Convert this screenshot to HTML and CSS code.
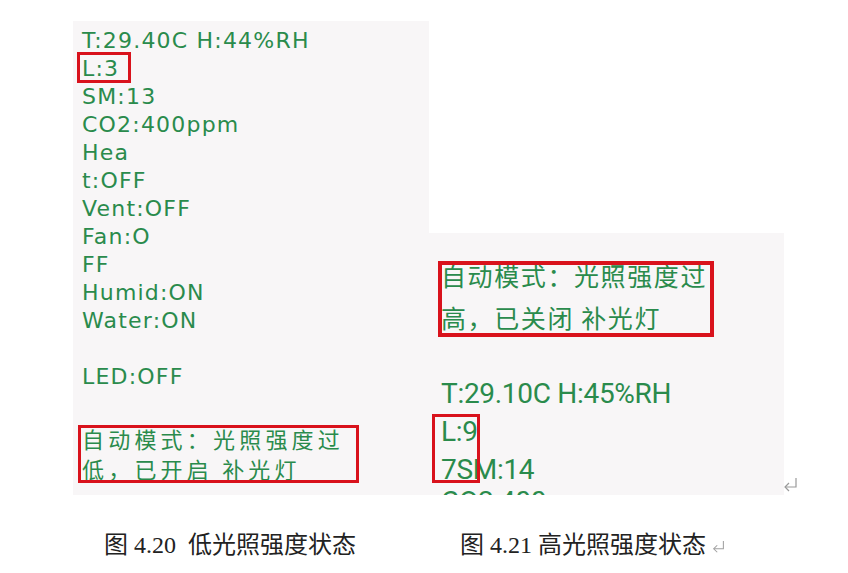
FILE: index.html
```html
<!DOCTYPE html>
<html lang="zh">
<head>
<meta charset="utf-8">
<title>光照强度状态</title>
<link rel="stylesheet" href="styles.css">
</head>
<body>
<div class="figure">
  <div class="panel panel-left">
    <div class="line">T:29.40C H:44%RH</div>
    <div class="line"><span class="mark mark-l3">L:3</span></div>
    <div class="line">SM:13</div>
    <div class="line">CO2:400ppm</div>
    <div class="line">Hea</div>
    <div class="line">t:OFF</div>
    <div class="line">Vent:OFF</div>
    <div class="line">Fan:O</div>
    <div class="line">FF</div>
    <div class="line">Humid:ON</div>
    <div class="line">Water:ON</div>
    <div class="line">&nbsp;</div>
    <div class="line">LED:OFF</div>
    <div class="line">&nbsp;</div>
    <div class="cn-left mark mark-cn-left">
      <div>自动模式：光照强度过</div>
      <div>低，已开启 补光灯</div>
    </div>
  </div>
  <div class="panel panel-right">
    <div class="cn-right mark mark-cn-right">
      <div>自动模式：光照强度过</div>
      <div>高，已关闭 补光灯</div>
    </div>
    <div class="data-right">
      <div class="rline">T:29.10C H:45%RH</div>
      <div class="rline">L:9</div>
      <div class="rline">7SM:14</div>
      <div class="rline rline-cut">CO2:400ppm</div>
    </div>
    <div class="mark-l9"></div>
  </div>
  <svg class="ret" width="16" height="16" viewBox="0 0 16 16"><polyline points="13,1 13,10 2,10" fill="none" stroke="#9a9a9a" stroke-width="1.2"/><polyline points="6,6 2,10 6,14" fill="none" stroke="#9a9a9a" stroke-width="1.2"/></svg>
</div>
<div class="captions">
  <div class="cap cap-left">图 4.20&nbsp; 低光照强度状态</div>
  <div class="cap cap-right">图 4.21 高光照强度状态 <svg class="ret-cap" width="14" height="14" viewBox="0 0 16 16"><polyline points="13,1 13,10 2,10" fill="none" stroke="#a0a0a0" stroke-width="1.2"/><polyline points="6,6 2,10 6,14" fill="none" stroke="#a0a0a0" stroke-width="1.2"/></svg></div>
</div>
</body>
</html>
```
FILE: styles.css
```css
html, body {
  margin: 0;
  padding: 0;
  background: #ffffff;
}

.figure {
  display: flex;
  align-items: flex-end;
  padding-left: 73px;
  padding-top: 21px;
}

.panel {
  background: #f8f6f7;
  color: #2a8b4c;
  position: relative;
  box-sizing: border-box;
}

.panel-left {
  width: 356px;
  height: 474px;
  padding: 6px 0 0 9px;
  font-family: "DejaVu Sans", sans-serif;
  font-size: 22px;
  letter-spacing: 1.2px;
}

.line {
  height: 28px;
  line-height: 28px;
  white-space: nowrap;
}

.mark {
  position: relative;
}

.mark-l3 {
  display: inline-block;
}

.mark-l3::after {
  content: "";
  position: absolute;
  left: -5px;
  top: -3px;
  width: 48px;
  height: 25px;
  border: 3px solid #d9121c;
}

.cn-left {
  margin-top: 4px;
  font-family: "Noto Sans CJK SC", sans-serif;
  font-size: 22px;
  letter-spacing: 4.2px;
  line-height: 30px;
  white-space: nowrap;
}

.mark-cn-left::after {
  content: "";
  position: absolute;
  left: -4px;
  top: 2px;
  width: 275px;
  height: 52px;
  border: 3px solid #d9121c;
}

.panel-right {
  width: 355px;
  height: 262px;
  overflow: hidden;
  padding: 21px 0 0 12px;
}

.cn-right {
  font-family: "Noto Sans CJK SC", sans-serif;
  font-size: 25px;
  letter-spacing: 1.6px;
  line-height: 42px;
  white-space: nowrap;
}

.mark-cn-right::after {
  content: "";
  position: absolute;
  left: -3px;
  top: 7px;
  width: 268px;
  height: 68px;
  border: 4px solid #d9121c;
}

.data-right {
  margin-top: 37px;
  font-family: Roboto, sans-serif;
  font-size: 28px;
  letter-spacing: -0.3px;
}

.rline {
  height: 38px;
  line-height: 38px;
  white-space: nowrap;
}

.rline-cut {
  margin-top: -6px;
}

.mark-l9 {
  position: absolute;
  left: 3px;
  top: 181px;
  width: 42px;
  height: 63px;
  border: 3px solid #d9121c;
}

.ret {
  margin-left: -1px;
  margin-bottom: 2px;
}

.captions {
  display: flex;
  padding-left: 104px;
  margin-top: 35px;
  font-family: "Liberation Serif", "Noto Sans CJK SC", serif;
  font-size: 24px;
  line-height: 30px;
  color: #222222;
}

.cap-left {
  width: 356px;
  white-space: nowrap;
}

.cap-right {
  white-space: nowrap;
}

.ret-cap {
  vertical-align: -1px;
}
```
